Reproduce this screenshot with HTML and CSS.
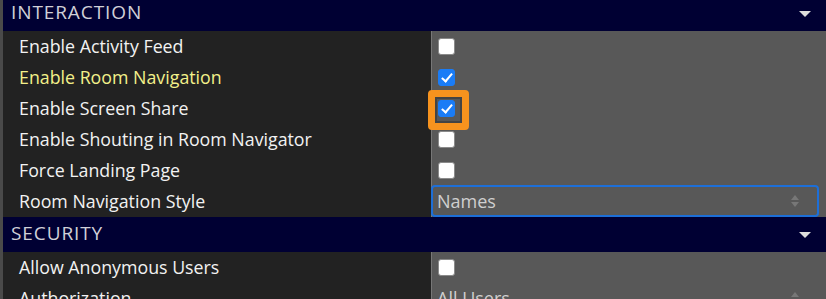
FILE: index.html
```html
<!DOCTYPE html>
<html lang="en">
<head>
    <meta charset="UTF-8">
    <title>Settings</title>
    <link rel="stylesheet" href="styles.css">
</head>
<body>

<div class="panel">

    <!-- Interaction -->
    <div class="section-head">
        <span>INTERACTION</span>
        <span class="caret"></span>
    </div>
    <div class="row">
        <div class="label">Enable Activity Feed</div>
        <div class="value"><span class="check"></span></div>
    </div>
    <div class="row">
        <div class="label changed">Enable Room Navigation</div>
        <div class="value"><span class="check on"></span></div>
    </div>
    <div class="row">
        <div class="label">Enable Screen Share</div>
        <div class="value"><span class="check on focused"></span></div>
    </div>
    <div class="row">
        <div class="label">Enable Shouting in Room Navigator</div>
        <div class="value"><span class="check"></span></div>
    </div>
    <div class="row">
        <div class="label">Force Landing Page</div>
        <div class="value"><span class="check"></span></div>
    </div>
    <div class="row">
        <div class="label">Room Navigation Style</div>
        <div class="value">
            <div class="select active">
                <span>Names</span>
                <span class="spin"></span>
            </div>
        </div>
    </div>

    <!-- Security -->
    <div class="section-head">
        <span>SECURITY</span>
        <span class="caret"></span>
    </div>
    <div class="row">
        <div class="label">Allow Anonymous Users</div>
        <div class="value"><span class="check"></span></div>
    </div>
    <div class="row">
        <div class="label">Authorization</div>
        <div class="value">
            <div class="select">
                <span>All Users</span>
                <span class="spin"></span>
            </div>
        </div>
    </div>
</div>

</body>
</html>
```

FILE: styles.css
```css
body {
    margin: 0;
    background: #222;
    font-family: "Open Sans", Lato, sans-serif;
    overflow: hidden;
}
.panel {
    margin-top: -4px;
    border-left: 3px solid #4a4a4a;
}
.section-head {
    box-sizing: border-box;
    display: flex;
    align-items: center;
    justify-content: space-between;
    height: 35px;
    padding: 0 15px 3px 8px;
    background: #000033;
    color: #d0d0d8;
    font-size: 19px;
    letter-spacing: 0.9px;
}
.caret {
    width: 0;
    height: 0;
    margin-top: 3px;
    border-left: 6px solid transparent;
    border-right: 6px solid transparent;
    border-top: 6px solid #ddd;
}
.row {
    display: grid;
    grid-template-columns: 428px 1fr;
    height: 31px;
}
.label {
    box-sizing: border-box;
    display: flex;
    align-items: center;
    padding: 0 0 2px 16px;
    color: #f2f2f2;
    font-size: 17.8px;
    background: #222;
}
.label.changed {
    color: #f3f08a;
}
.value {
    display: flex;
    align-items: center;
    padding-left: 6px;
    background: #585858;
    border-left: 1px solid #777;
}
.check {
    position: relative;
    box-sizing: border-box;
    width: 17px;
    height: 17px;
    margin-top: -1px;
    background: #fff;
    border: 1px solid #8a8a8a;
    border-radius: 3px;
}
.check.on {
    background: #1a7cf6;
    border-color: #1a7cf6;
}
.check.on::after {
    content: "";
    position: absolute;
    left: 5px;
    top: 1px;
    width: 4px;
    height: 9px;
    border: solid #fff;
    border-width: 0 2.5px 2.5px 0;
    transform: rotate(40deg);
}
/* keyboard focus ring drawn over the row */
.check.focused::before {
    content: "";
    position: absolute;
    left: -11px;
    top: -11px;
    width: 27px;
    height: 26px;
    border: 7px solid #f7931e;
    border-radius: 4px;
    box-shadow: inset 0 0 0 2px #444;
}
.select {
    box-sizing: border-box;
    display: flex;
    align-items: center;
    justify-content: space-between;
    width: 100%;
    height: 32px;
    margin-left: -7px;
    margin-top: -1px;
    padding: 0 18px 1px 4px;
    border: 2px solid transparent;
    border-radius: 4px;
    color: #cfcfcf;
    font-size: 18px;
}
.select.active {
    border-color: #1d6fd8;
}
.spin {
    position: relative;
    width: 8px;
    height: 14px;
}
.spin::before,
.spin::after {
    content: "";
    position: absolute;
    left: 0;
    border-left: 4px solid transparent;
    border-right: 4px solid transparent;
}
.spin::before {
    top: 1px;
    border-bottom: 5px solid #777;
}
.spin::after {
    bottom: 1px;
    border-top: 5px solid #777;
}
```
